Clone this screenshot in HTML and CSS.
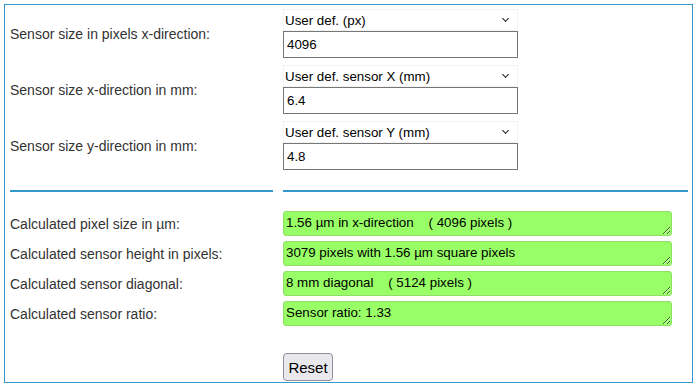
FILE: index.html
```html
<!doctype html>
<html lang="en">
<head>
<title>Sensor size calculator</title>
<link rel="stylesheet" href="styles.css">
</head>
<body>
<div class="calc">
  <div class="inputs">
    <label class="name" for="px">Sensor size in pixels x-direction:</label>
    <div class="field">
      <span class="pick"><select id="pxsel"><option>User def. (px)</option></select></span>
      <input id="px" type="text" value="4096">
    </div>
    <label class="name" for="sx">Sensor size x-direction in mm:</label>
    <div class="field">
      <span class="pick"><select id="sxsel"><option>User def. sensor X (mm)</option></select></span>
      <input id="sx" type="text" value="6.4">
    </div>
    <label class="name" for="sy">Sensor size y-direction in mm:</label>
    <div class="field">
      <span class="pick"><select id="sysel"><option>User def. sensor Y (mm)</option></select></span>
      <input id="sy" type="text" value="4.8">
    </div>
  </div>

  <div class="rules"><div class="rule"></div><div class="rule"></div></div>

  <div class="results">
    <label class="name" for="r1">Calculated pixel size in µm:</label>
    <textarea id="r1" class="out" rows="1" readonly>1.56 µm in x-direction    ( 4096 pixels )</textarea>
    <label class="name" for="r2">Calculated sensor height in pixels:</label>
    <textarea id="r2" class="out" rows="1" readonly>3079 pixels with 1.56 µm square pixels</textarea>
    <label class="name" for="r3">Calculated sensor diagonal:</label>
    <textarea id="r3" class="out" rows="1" readonly>8 mm diagonal    ( 5124 pixels )</textarea>
    <label class="name" for="r4">Calculated sensor ratio:</label>
    <textarea id="r4" class="out" rows="1" readonly>Sensor ratio: 1.33</textarea>
    <span></span>
    <div class="actions"><button id="reset" type="button">Reset</button></div>
  </div>
</div>
</body>
</html>
```

FILE: styles.css
```css
body {
  margin: 4px;
  font-family: "Liberation Sans", Arial, sans-serif;
}
.calc {
  width: 678px;
  border: 1px solid #3399cc;
  padding: 4px 4px 1px 5px;
}
.inputs,
.rules,
.results {
  display: grid;
  grid-template-columns: 263px 405px;
  column-gap: 10px;
}
.inputs { row-gap: 7px; }
.name {
  align-self: center;
  font-size: 14px;
  color: #333;
}
.field {
  display: flex;
  flex-direction: column;
  width: 235px;
}
.pick {
  position: relative;
  display: block;
}
.pick:after {
  content: "";
  position: absolute;
  right: 10px;
  top: 7px;
  width: 4px;
  height: 4px;
  border-right: 1.5px solid #222;
  border-bottom: 1.5px solid #222;
  transform: rotate(45deg);
  pointer-events: none;
}
select {
  appearance: none;
  display: block;
  width: 100%;
  height: 22px;
  font-family: inherit;
  font-size: 13.33px;
  color: #000;
  background: #fff;
  border: 1px solid #f3f3f3;
  border-radius: 0;
  padding: 0 0 0 1px;
  margin: 0;
}
input {
  height: 27px;
  box-sizing: border-box;
  font-family: inherit;
  font-size: 13.33px;
  border: 1px solid #767676;
  border-radius: 0;
  padding: 1px 3px;
  margin: 0;
}
.rules { margin-top: 20px; }
.rule {
  height: 2px;
  background: #3399cc;
}
.results {
  margin-top: 19px;
  row-gap: 5px;
}
.out {
  width: 389px;
  height: 25px;
  box-sizing: border-box;
  font-family: inherit;
  font-size: 13.33px;
  line-height: 16px;
  background: #99ff66;
  border: 1px solid #8fdf66;
  border-radius: 3px;
  padding: 3px 2px;
  margin: 0;
  white-space: pre;
  overflow: hidden;
  resize: both;
}
.actions { margin-top: 22px; }
button {
  height: 28px;
  width: 50px;
  font-family: inherit;
  font-size: 15px;
  color: #000;
  background: #e9e9ed;
  border: 1px solid #8f8f9d;
  border-radius: 4px;
  padding: 0;
  cursor: pointer;
}
```
